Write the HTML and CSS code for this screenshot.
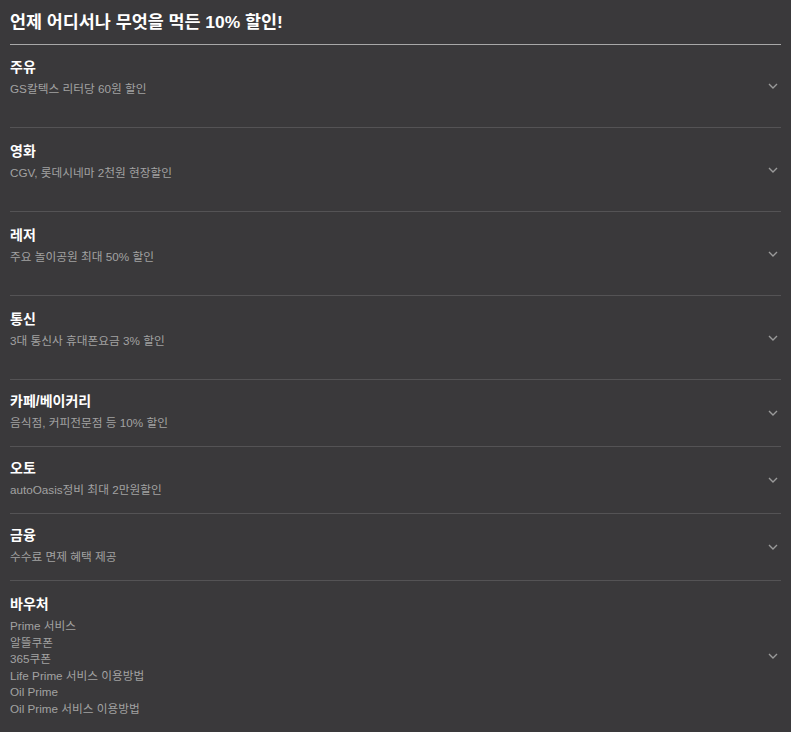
FILE: index.html
```html
<!DOCTYPE html>
<html lang="ko">
<head>
<meta charset="utf-8">
<link rel="stylesheet" href="styles.css">
</head>
<body>
<div class="page">
  <h1 class="title">언제 어디서나 무엇을 먹든 10% 할인!</h1>
  <ul class="list">
    <li class="item tall">
      <div class="text"><div class="name">주유</div><div class="desc">GS칼텍스 리터당 60원 할인</div></div>
      <svg class="chev" viewBox="0 0 10 6"><path d="M1 1l4 4 4-4"/></svg>
    </li>
    <li class="item tall">
      <div class="text"><div class="name">영화</div><div class="desc">CGV, 롯데시네마 2천원 현장할인</div></div>
      <svg class="chev" viewBox="0 0 10 6"><path d="M1 1l4 4 4-4"/></svg>
    </li>
    <li class="item tall">
      <div class="text"><div class="name">레저</div><div class="desc">주요 놀이공원 최대 50% 할인</div></div>
      <svg class="chev" viewBox="0 0 10 6"><path d="M1 1l4 4 4-4"/></svg>
    </li>
    <li class="item tall">
      <div class="text"><div class="name">통신</div><div class="desc">3대 통신사 휴대폰요금 3% 할인</div></div>
      <svg class="chev" viewBox="0 0 10 6"><path d="M1 1l4 4 4-4"/></svg>
    </li>
    <li class="item">
      <div class="text"><div class="name">카페/베이커리</div><div class="desc">음식점, 커피전문점 등 10% 할인</div></div>
      <svg class="chev" viewBox="0 0 10 6"><path d="M1 1l4 4 4-4"/></svg>
    </li>
    <li class="item">
      <div class="text"><div class="name">오토</div><div class="desc">autoOasis정비 최대 2만원할인</div></div>
      <svg class="chev" viewBox="0 0 10 6"><path d="M1 1l4 4 4-4"/></svg>
    </li>
    <li class="item">
      <div class="text"><div class="name">금융</div><div class="desc">수수료 면제 혜택 제공</div></div>
      <svg class="chev" viewBox="0 0 10 6"><path d="M1 1l4 4 4-4"/></svg>
    </li>
    <li class="item last">
      <div class="text"><div class="name">바우처</div>
        <div class="desc multi">
          <div>Prime 서비스</div>
          <div>알뜰쿠폰</div>
          <div>365쿠폰</div>
          <div>Life Prime 서비스 이용방법</div>
          <div>Oil Prime</div>
          <div>Oil Prime 서비스 이용방법</div>
        </div>
      </div>
      <svg class="chev" viewBox="0 0 10 6"><path d="M1 1l4 4 4-4"/></svg>
    </li>
  </ul>
</div>
</body>
</html>
```

FILE: styles.css
```css
html, body {
  margin: 0;
  padding: 0;
  background: #3a393b;
}
body {
  font-family: "Liberation Sans", "Noto Sans CJK KR", sans-serif;
  color: #fff;
}
.page {
  padding: 0 10px;
}
.title {
  margin: 0;
  padding: 10px 0 10px;
  font-size: 17.4px;
  line-height: 24px;
  font-weight: bold;
  color: #fff;
  border-bottom: 1px solid #a8a8a8;
}
.list {
  list-style: none;
  margin: 0;
  padding: 0;
}
.item {
  display: flex;
  align-items: center;
  justify-content: space-between;
  border-bottom: 1px solid #545355;
}
.text {
  padding: 11px 0 14px;
}
.item.tall .text {
  padding: 13px 0 29px;
}
.item.tall:first-child .text {
  padding-top: 12px;
}
.item.last {
  border-bottom: none;
}
.item.last .text {
  padding: 13px 0 14px;
}
.name {
  font-size: 14px;
  line-height: 20px;
  font-weight: bold;
  color: #fff;
}
.desc {
  margin-top: 3px;
  font-size: 11.7px;
  line-height: 18px;
  color: #a2a2a2;
}
.desc.multi {
  line-height: 16.6px;
  margin-top: 4px;
}
.chev {
  width: 10px;
  height: 6px;
  margin-right: 3px;
  flex: none;
  fill: none;
  stroke: #9a9a9a;
  stroke-width: 1.4;
}
```
